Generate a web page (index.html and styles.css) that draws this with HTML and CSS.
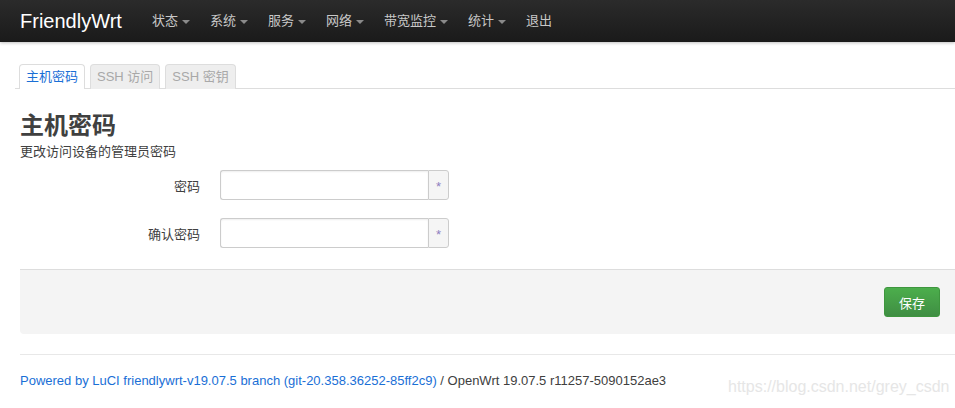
FILE: index.html
```html
<!DOCTYPE html>
<html lang="zh">
<head>
<meta charset="utf-8">
<title>FriendlyWrt</title>
<link rel="stylesheet" href="styles.css">
</head>
<body>
<header class="navbar">
  <a class="brand">FriendlyWrt</a>
  <ul class="nav">
    <li><span>状态</span><i class="caret"></i></li>
    <li><span>系统</span><i class="caret"></i></li>
    <li><span>服务</span><i class="caret"></i></li>
    <li><span>网络</span><i class="caret"></i></li>
    <li><span>带宽监控</span><i class="caret"></i></li>
    <li><span>统计</span><i class="caret"></i></li>
    <li><span>退出</span></li>
  </ul>
</header>
<main class="main">
  <ul class="tabs">
    <li class="tab active">主机密码</li>
    <li class="tab">SSH 访问</li>
    <li class="tab">SSH 密钥</li>
  </ul>
  <section class="content">
    <h2 class="title">主机密码</h2>
    <div class="desc">更改访问设备的管理员密码</div>
    <div class="form">
      <div class="row">
        <label class="label">密码</label>
        <div class="group"><input class="input" type="password"><span class="addon">*</span></div>
      </div>
      <div class="row">
        <label class="label">确认密码</label>
        <div class="group"><input class="input" type="password"><span class="addon">*</span></div>
      </div>
    </div>
  </section>
  <div class="actions">
    <button class="btn-save">保存</button>
  </div>
  <footer class="footer">
    <a class="link">Powered by LuCI friendlywrt-v19.07.5 branch (git-20.358.36252-85ff2c9)</a> / OpenWrt 19.07.5 r11257-5090152ae3
  </footer>
</main>
<div class="watermark">https://blog.csdn.net/grey_csdn</div>
</body>
</html>
```
FILE: styles.css
```css
html, body {
  margin: 0;
  padding: 0;
}
body {
  font-family: "Liberation Sans", "Noto Sans CJK SC", sans-serif;
  font-size: 13px;
  color: #404040;
  background: #fff;
  position: relative;
  height: 408px;
  overflow: hidden;
}
.navbar {
  height: 42px;
  display: flex;
  align-items: center;
  background: linear-gradient(#2b2b2b, #1a1a1a);
  box-shadow: 0 1px 3px rgba(0,0,0,0.25);
}
.brand {
  padding-left: 20px;
  font-size: 20px;
  color: #fff;
  width: 112px;
  line-height: 42px;
}
.nav {
  display: flex;
  list-style: none;
  margin: 0;
  padding: 0 0 0 10px;
}
.nav li {
  display: flex;
  align-items: center;
  padding: 0 10px;
  color: #c8c8c8;
  font-size: 13px;
  line-height: 42px;
}
.caret {
  display: inline-block;
  width: 0;
  height: 0;
  margin-left: 4px;
  border-left: 4px solid transparent;
  border-right: 4px solid transparent;
  border-top: 4px solid #8a8a8a;
  margin-top: 1px;
}
.main {
  padding-left: 20px;
}
.tabs {
  display: flex;
  list-style: none;
  margin: 22px 0 0 -5px;
  padding: 0 0 0 4px;
  border-bottom: 1px solid #ddd;
  gap: 5px;
}
.tab {
  height: 23px;
  line-height: 23px;
  padding: 0 6px;
  border: 1px solid #ddd;
  border-bottom: none;
  border-radius: 4px 4px 0 0;
  background: #eee;
  color: #a8a8a8;
  margin-bottom: -1px;
  padding-bottom: 1px;
}
.tab.active {
  background: #fff;
  color: #1a6fd6;
}
.content {
  padding-top: 21px;
}
.title {
  margin: 0;
  font-size: 24px;
  font-weight: bold;
  line-height: 32px;
  color: #404040;
}
.desc {
  line-height: 16px;
  margin-top: 2px;
}
.form {
  margin-top: 10px;
  display: flex;
  flex-direction: column;
  gap: 18px;
}
.row {
  display: flex;
  align-items: center;
  height: 30px;
}
.label {
  width: 180px;
  text-align: right;
  padding-right: 20px;
}
.group {
  display: flex;
  height: 30px;
}
.input {
  box-sizing: border-box;
  width: 208px;
  height: 30px;
  margin: 0;
  border: 1px solid #ccc;
  border-right: none;
  border-radius: 3px 0 0 3px;
  box-shadow: inset 0 1px 2px rgba(0,0,0,0.07);
  background: #fff;
  outline: none;
}
.addon {
  box-sizing: border-box;
  width: 21px;
  height: 30px;
  border: 1px solid #ccc;
  border-radius: 0 3px 3px 0;
  background: #f5f5f5;
  color: #8e7fc0;
  font-size: 13px;
  padding-top: 3px;
  display: flex;
  align-items: center;
  justify-content: center;
}
.actions {
  margin-top: 21px;
  height: 64px;
  border-top: 1px solid #ddd;
  background: #f4f4f4;
  border-radius: 0 0 0 4px;
  display: flex;
  justify-content: flex-end;
  align-items: flex-start;
  padding-right: 15px;
}
.btn-save {
  margin-top: 17px;
  width: 56px;
  height: 30px;
  border: 1px solid #3e963e;
  border-radius: 3px;
  background: linear-gradient(#4cae4c, #3f8e43);
  color: #fff;
  font-family: "Noto Sans CJK SC", sans-serif;
  font-size: 13px;
  padding: 0;
}
.footer {
  margin-top: 20px;
  border-top: 1px solid #e8e8e8;
  padding-top: 17px;
  font-size: 13px;
  color: #404040;
  line-height: 18px;
}
.link {
  color: #1a6fd6;
}
.watermark {
  position: absolute;
  left: 728px;
  top: 378px;
  font-size: 16px;
  color: #e6e6e6;
  font-family: "Liberation Sans", sans-serif;
}
```
